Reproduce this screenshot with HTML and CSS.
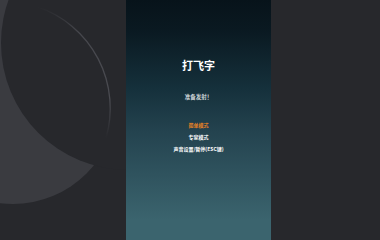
FILE: index.html
```html
<!DOCTYPE html>
<html lang="zh-CN">
<head>
<meta charset="utf-8">
<title>打飞字</title>
<link rel="stylesheet" href="styles.css">
</head>
<body>
<div class="stage">
  <div class="side side-left">
    <svg class="deco" width="126" height="220" viewBox="0 0 126 220" aria-hidden="true">
      <defs>
        <linearGradient id="arcfade" x1="0" y1="0" x2="0" y2="1">
          <stop offset="0" stop-color="#4a4b51" stop-opacity="0"/>
          <stop offset="0.2" stop-color="#4a4b51" stop-opacity="0.9"/>
          <stop offset="0.7" stop-color="#4a4b51" stop-opacity="1"/>
          <stop offset="1" stop-color="#4a4b51" stop-opacity="0"/>
        </linearGradient>
      </defs>
      <rect width="126" height="220" fill="#27282c"/>
      <circle cx="13" cy="100" r="104" fill="#3a3b40"/>
      <circle cx="128" cy="43" r="127" fill="#27282c"/>
      <path d="M38 7 A107 107 0 0 1 106 138" fill="none" stroke="url(#arcfade)" stroke-width="1.3"/>
    </svg>
  </div>
  <main class="panel">
    <h1 class="title">打飞字</h1>
    <p class="subtitle">准备发射！</p>
    <ul class="menu">
      <li class="menu-item active">简单模式</li>
      <li class="menu-item">专家模式</li>
      <li class="menu-item">声音设置/暂停(ESC键)</li>
    </ul>
  </main>
  <div class="side side-right"></div>
</div>
</body>
</html>
```
FILE: styles.css
```css
html, body {
  margin: 0;
  padding: 0;
  width: 100%;
  height: 100%;
  overflow: hidden;
  background: #27282c;
  font-family: "Noto Sans CJK SC", "Noto Sans", sans-serif;
}

.stage {
  display: flex;
  width: 100%;
  height: 100vh;
}

.side {
  background: #27282c;
}

.side-left {
  width: 126px;
  flex: none;
}

.deco {
  display: block;
}

.side-right {
  flex: 1;
}

.panel {
  width: 145px;
  flex: none;
  height: 100vh;
  box-sizing: border-box;
  padding-top: 58px;
  display: flex;
  flex-direction: column;
  align-items: center;
  background: linear-gradient(180deg, #07131a 0px, #0a1921 30px, #15303b 88px, #24434f 132px, #3b646e 220px);
  background-color: #3b646e;
  color: #ffffff;
}

.title {
  margin: 0;
  font-size: 11px;
  line-height: 14px;
  font-weight: 700;
  letter-spacing: 0;
}

.subtitle {
  margin: 21px 0 0;
  font-size: 5.5px;
  line-height: 8px;
  font-weight: 500;
  color: #e6eaec;
}

.menu {
  list-style: none;
  margin: 18px 0 0;
  padding: 0;
  display: flex;
  flex-direction: column;
  align-items: center;
}

.menu-item {
  font-size: 5px;
  line-height: 12px;
  font-weight: 700;
  color: #ffffff;
}

.menu-item.active {
  color: #ef8424;
}
```
